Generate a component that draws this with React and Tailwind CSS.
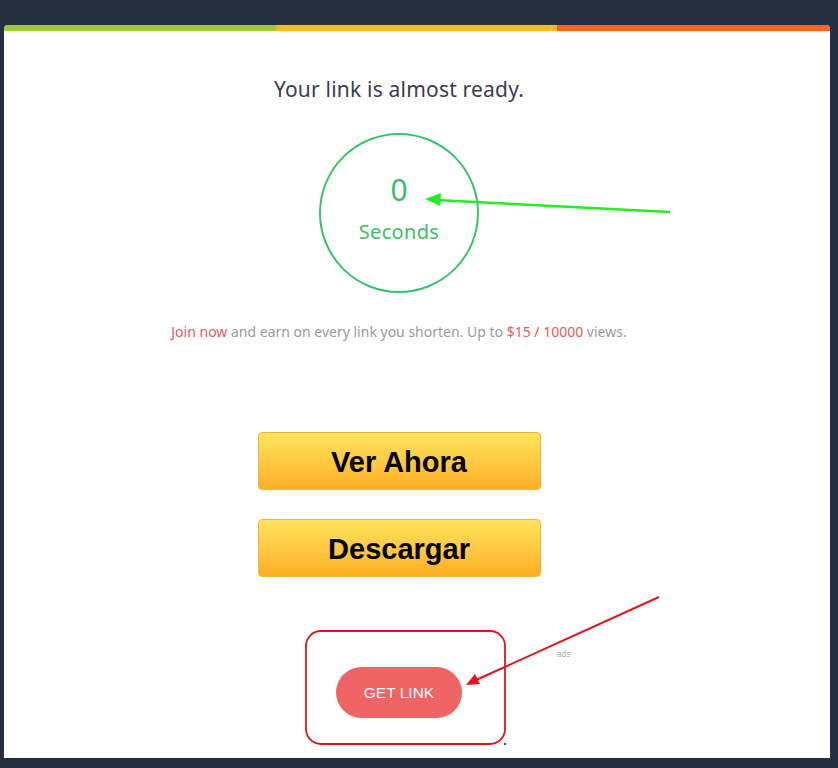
import React from 'react';

const App = () => {
  return (
    <div className="relative w-[838px] h-[768px] bg-[#252f3e] overflow-hidden" style={{ fontFamily: '"Noto Sans", sans-serif' }}>
      <div className="ml-[4px] mt-[25px] w-[826px] h-[733px] bg-white rounded-t-[4px] overflow-hidden flex flex-col">
        {/* top colour bar */}
        <div className="flex h-[6px] shrink-0">
          <div className="w-[272px] bg-[#9cc63c]" />
          <div className="w-[281px] bg-[#fcb920]" />
          <div className="flex-1 bg-[#f7661c]" />
        </div>

        <div className="flex flex-col items-center pr-[36px] pt-[44px]">
          <h1 className="text-[21px] leading-[28px] tracking-[0.2px] text-[#3b3d50] font-normal">Your link is almost ready.</h1>

          <div className="mt-[30px] w-[160px] h-[160px] rounded-full border-[2.5px] border-[#3ac26b] flex flex-col items-center justify-center pb-[8px]">
            <span className="text-[30px] leading-[32px] text-[#3fbc66]">0</span>
            <span className="mt-[14px] text-[20px] leading-[24px] tracking-[0.3px] text-[#3fbc66]">Seconds</span>
          </div>

          <p className="mt-[29px] text-[14px] leading-[20px] text-[#9a9a9a]">
            <span className="text-[#e35a5a]">Join now</span> and earn on every link you shorten. Up to{' '}
            <span className="text-[#e35a5a]">$15 / 10000</span> views.
          </p>

          <button
            className="mt-[90px] w-[283px] h-[58px] pt-[3px] rounded-[4px] border border-[#f1b43a] bg-gradient-to-b from-[#ffe45c] to-[#ffaf22] text-black text-[29px] font-bold"
            style={{ fontFamily: '"Liberation Sans", Arial, sans-serif' }}
          >
            Ver Ahora
          </button>
          <button
            className="mt-[29px] w-[283px] h-[58px] pt-[3px] rounded-[4px] border border-[#f1b43a] bg-gradient-to-b from-[#ffe45c] to-[#ffaf22] text-black text-[29px] font-bold"
            style={{ fontFamily: '"Liberation Sans", Arial, sans-serif' }}
          >
            Descargar
          </button>

          <div className="relative mt-[90px] w-full flex justify-center">
            <button
              className="w-[126px] h-[51px] rounded-full bg-[#f06466] text-white text-[15.5px]"
              style={{ fontFamily: '"Liberation Sans", Arial, sans-serif' }}
            >
              GET LINK
            </button>
            <span className="absolute left-[553px] top-[-19px] text-[8px] text-[#aaa]">ads</span>
          </div>
        </div>
      </div>

      {/* annotations drawn over the screenshot */}
      <svg className="absolute left-0 top-0 pointer-events-none" width="838" height="768" viewBox="0 0 838 768">
        <line x1="670" y1="212" x2="436" y2="200" stroke="#22ee22" strokeWidth="2.5" />
        <polygon points="425,199 441,193 440,206" fill="#22ee22" />
        <rect x="306" y="631" width="199" height="113" rx="15" fill="none" stroke="#e2141a" strokeWidth="1.8" />
        <rect x="504" y="743" width="2" height="2" fill="#e2141a" />
        <line x1="659" y1="597" x2="476" y2="680" stroke="#e2141a" strokeWidth="2" />
        <polygon points="466,685 475,674 480,684" fill="#e2141a" />
      </svg>
    </div>
  );
};

export default App;
